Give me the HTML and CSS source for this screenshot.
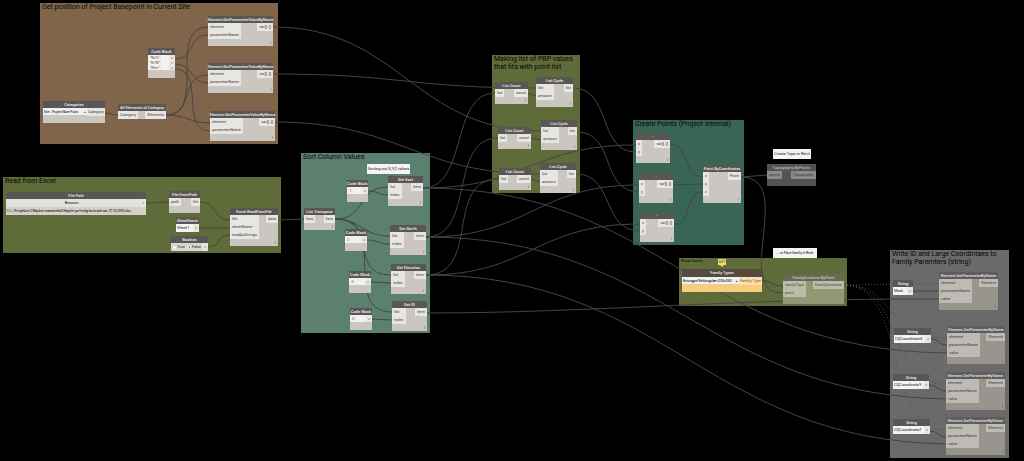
FILE: index.html
```html
<!DOCTYPE html>
<html lang="en">
<head>
<meta charset="utf-8">
<title>Topography graph</title>
<link rel="stylesheet" href="styles.css">
</head>
<body>
<main class="canvas">
<section class="group brown" id="g-base"><h2>Get position of Project Basepoint in Current Site</h2></section>
<section class="group olive" id="g-excel"><h2>Read from Excel</h2></section>
<section class="group sage" id="g-sort"><h2>Sort Column Values</h2></section>
<section class="group olive" id="g-list"><h2>Making list of PBP values<br>that fits with point list</h2></section>
<section class="group teal" id="g-points"><h2>Create Points (Project Internal)</h2></section>
<section class="group olive" id="g-family"><h2 class="minor">Place family</h2></section>
<section class="group gray" id="g-write"><h2>Write ID and Large Coordintaes to<br>Family Paremters (string)</h2></section>

<svg class="wires" aria-hidden="true">
<path d="M105 113C112 113 111 115 118 115"/>
<path d="M166 115C208 115 166 27 208 27"/>
<path d="M166 115C196 115 178 75 208 75"/>
<path d="M166 115C188 115 188 123 210 123"/>
<path d="M175 59C196 59 187 35 208 35"/>
<path d="M175 64C192 64 191 83 208 83"/>
<path d="M175 69C206 69 179 131 210 131"/>
<path d="M273 27C400 27 414 131 541 131"/>
<path d="M273 74C400 74 410 88 537 88"/>
<path d="M275 122C400 122 415 174 540 174"/>
<path d="M146 203C155 203 160 202 169 202"/>
<path d="M200 202C218 202 212 220 230 220"/>
<path d="M199 228H230"/>
<path d="M208 247C222 247 216 235 230 235"/>
<path d="M278 220L304 219"/>
<path d="M335 219C367 219 356 187 388 187"/>
<path d="M335 219C362 219 361 236 390 236"/>
<path d="M335 219C382 219 346 275 391 275"/>
<path d="M335 219C390 219 340 312 392 312"/>
<path d="M368 191C378 191 378 195 388 195"/>
<path d="M367 240C378 240 378 244 390 244"/>
<path d="M371 282L391 283"/>
<path d="M372 319L392 320"/>
<path d="M423 188C468 188 450 93 495 93"/>
<path d="M426 237C476 237 448 138 498 138"/>
<path d="M426 275C482 275 443 179 499 179"/>
<path d="M423 188C526 188 533 145 636 145"/>
<path d="M426 237C530 237 535 185 639 185"/>
<path d="M426 275C530 275 535 224 640 224"/>
<path d="M528 93L536 96"/>
<path d="M531 138L541 140"/>
<path d="M531 179L540 182"/>
<path d="M573 88C612 88 597 152 636 152"/>
<path d="M577 132C616 132 600 192 639 192"/>
<path d="M576 174C615 174 601 231 640 231"/>
<path d="M670 144C690 144 683 177 703 177"/>
<path d="M673 185L703 184"/>
<path d="M674 224C694 224 683 192 703 192"/>
<path d="M741 177L767 175"/>
<path d="M741 177C797 177 731 293 783 293"/>
<path d="M762 281C774 281 771 286 783 286"/>
<path d="M427 313C590 313 740 298 939 299"/>
<path d="M423 188C663 188 695 350 947 353"/>
<path d="M426 237C666 237 706 395 946 399"/>
<path d="M426 275C666 275 706 440 946 444"/>
<path class="dotted" d="M844 285L939 284"/>
<path class="dotted" d="M844 285C899 285 880 338 947 338"/>
<path class="dotted" d="M844 285C904 285 886 384 946 384"/>
<path class="dotted" d="M844 285C909 285 881 430 946 430"/>
<path d="M913 291H939"/>
<path d="M931 339C939 339 939 345 947 345"/>
<path d="M929 385C937 385 938 391 946 391"/>
<path d="M930 431C938 431 938 437 946 437"/>
</svg>

<article class="node lace" id="gp1"><h3>Element.GetParameterValueByName</h3><div class="body"><ul><li>element</li><li>parameterName</li></ul><ul class="out"><li>var[]..[]</li></ul></div></article>
<article class="node lace" id="gp2"><h3>Element.GetParameterValueByName</h3><div class="body"><ul><li>element</li><li>parameterName</li></ul><ul class="out"><li>var[]..[]</li></ul></div></article>
<article class="node lace" id="gp3"><h3>Element.GetParameterValueByName</h3><div class="body"><ul><li>element</li><li>parameterName</li></ul><ul class="out"><li>var[]..[]</li></ul></div></article>
<article class="node code triple" id="code-axes"><h3>Code Block</h3><div class="body"><pre>"N/S";
"E/W";
"Elev";</pre><ul class="out"><li>&gt;</li><li>&gt;</li><li>&gt;</li></ul></div></article>
<article class="node" id="categories"><h3>Categories</h3><div class="body"><label class="pick"><select aria-label="Category"><option>Site - Project Base Point</option></select></label><ul class="out"><li>Category</li></ul></div></article>
<article class="node tight" id="all-elements"><h3>All Elements of Category</h3><div class="body"><ul><li>Category</li></ul><ul class="out"><li>Elements</li></ul></div></article>

<article class="node tight" id="file-path"><h3>File Path</h3><div class="body"><button type="button">Browse...</button><ul class="out"><li>&gt;</li></ul></div><p>C:\...\Prosjekter C\Røyken svømmehall\Høyder på ferdig bunnsåle sør_27-10-2015.xlsx</p></article>
<article class="node" id="from-path"><h3>File.FromPath</h3><div class="body"><ul><li>path</li></ul><ul class="out"><li>file</li></ul></div></article>
<article class="node tight" id="sheet"><h3>SheetName</h3><div class="body"><input type="text" aria-label="Sheet name" value="Sheet1"><ul class="out"><li>&gt;</li></ul></div></article>
<article class="node tight" id="bool"><h3>Boolean</h3><div class="body"><label><input type="radio" name="b">True</label><label><input type="radio" name="b" checked>False</label><ul class="out"><li>&gt;</li></ul></div></article>
<article class="node lace" id="read"><h3>Excel.ReadFromFile</h3><div class="body"><ul><li>file</li><li>sheetName</li><li>readAsStrings</li></ul><ul class="out"><li>data</li></ul></div></article>

<aside class="note" id="note-sort">Sorting out X,Y,Z values</aside>
<article class="node code" id="code-a"><h3>Code Block</h3><div class="body"><pre>1;</pre><ul class="out"><li>&gt;</li></ul></div></article>
<article class="node code" id="code-b"><h3>Code Block</h3><div class="body"><pre>2;</pre><ul class="out"><li>&gt;</li></ul></div></article>
<article class="node code" id="code-c"><h3>Code Block</h3><div class="body"><pre>3;</pre><ul class="out"><li>&gt;</li></ul></div></article>
<article class="node code" id="code-d"><h3>Code Block</h3><div class="body"><pre>0;</pre><ul class="out"><li>&gt;</li></ul></div></article>
<article class="node lace" id="transpose"><h3>List.Transpose</h3><div class="body"><ul><li>lists</li></ul><ul class="out"><li>lists</li></ul></div></article>
<article class="node lace" id="east"><h3>Get East</h3><div class="body"><ul><li>list</li><li>index</li></ul><ul class="out"><li>item</li></ul></div></article>
<article class="node lace" id="north"><h3>Get North</h3><div class="body"><ul><li>list</li><li>index</li></ul><ul class="out"><li>item</li></ul></div></article>
<article class="node lace" id="elevation"><h3>Get Elevation</h3><div class="body"><ul><li>list</li><li>index</li></ul><ul class="out"><li>item</li></ul></div></article>
<article class="node lace" id="get-id"><h3>Get ID</h3><div class="body"><ul><li>list</li><li>index</li></ul><ul class="out"><li>item</li></ul></div></article>

<article class="node lace" id="count1"><h3>List.Count</h3><div class="body"><ul><li>list</li></ul><ul class="out"><li>count</li></ul></div></article>
<article class="node lace" id="count2"><h3>List.Count</h3><div class="body"><ul><li>list</li></ul><ul class="out"><li>count</li></ul></div></article>
<article class="node lace" id="count3"><h3>List.Count</h3><div class="body"><ul><li>list</li></ul><ul class="out"><li>count</li></ul></div></article>
<article class="node lace" id="cycle1"><h3>List.Cycle</h3><div class="body"><ul><li>list</li><li>amount</li></ul><ul class="out"><li>list</li></ul></div></article>
<article class="node lace" id="cycle2"><h3>List.Cycle</h3><div class="body"><ul><li>list</li><li>amount</li></ul><ul class="out"><li>list</li></ul></div></article>
<article class="node lace" id="cycle3"><h3>List.Cycle</h3><div class="body"><ul><li>list</li><li>amount</li></ul><ul class="out"><li>list</li></ul></div></article>

<article class="node lace" id="minus1"><h3>-</h3><div class="body"><ul><li>x</li><li>y</li></ul><ul class="out"><li>var[]..[]</li></ul></div></article>
<article class="node lace" id="minus2"><h3>-</h3><div class="body"><ul><li>x</li><li>y</li></ul><ul class="out"><li>var[]..[]</li></ul></div></article>
<article class="node lace" id="minus3"><h3>-</h3><div class="body"><ul><li>x</li><li>y</li></ul><ul class="out"><li>var[]..[]</li></ul></div></article>
<article class="node lace" id="point"><h3>Point.ByCoordinates</h3><div class="body"><ul><li>x</li><li>y</li><li>z</li></ul><ul class="out"><li>Point</li></ul></div></article>
<aside class="note" id="note-topo">Create Topo in Revit</aside>
<article class="node frozen" id="topo"><h3>Topography.ByPoints</h3><div class="body"><ul><li>points</li></ul><ul class="out"><li>Topography</li></ul></div></article>

<aside class="note small" id="note-family">... or Place Family in Revit</aside>
<article class="node warning" id="family-types"><h3>Family Types</h3><div class="body"><label class="pick"><select aria-label="Family type"><option>Betongpel Rektangulær:(230x230)</option></select></label><ul class="out"><li>Family Type</li></ul></div></article>
<span class="pin">60?</span>
<article class="node faded" id="instance"><h3>FamilyInstance.ByPoint</h3><div class="body"><ul><li>familyType</li><li>point</li></ul><ul class="out"><li>FamilyInstance</li></ul></div></article>

<article class="node tight" id="str1"><h3>String</h3><div class="body"><input type="text" aria-label="Parameter 1" value="Mark"><ul class="out"><li>&gt;</li></ul></div></article>
<article class="node tight" id="str2"><h3>String</h3><div class="body"><input type="text" aria-label="Parameter 2" value="CQCoordinateX"><ul class="out"><li>&gt;</li></ul></div></article>
<article class="node tight" id="str3"><h3>String</h3><div class="body"><input type="text" aria-label="Parameter 3" value="CQCoordinateY"><ul class="out"><li>&gt;</li></ul></div></article>
<article class="node tight" id="str4"><h3>String</h3><div class="body"><input type="text" aria-label="Parameter 4" value="CQCoordinateZ"><ul class="out"><li>&gt;</li></ul></div></article>
<article class="node lace dim" id="set1"><h3>Element.SetParameterByName</h3><div class="body"><ul><li>element</li><li>parameterName</li><li>value</li></ul><ul class="out"><li>Element</li></ul></div></article>
<article class="node lace dim" id="set2"><h3>Element.SetParameterByName</h3><div class="body"><ul><li>element</li><li>parameterName</li><li>value</li></ul><ul class="out"><li>Element</li></ul></div></article>
<article class="node lace dim" id="set3"><h3>Element.SetParameterByName</h3><div class="body"><ul><li>element</li><li>parameterName</li><li>value</li></ul><ul class="out"><li>Element</li></ul></div></article>
<article class="node lace dim" id="set4"><h3>Element.SetParameterByName</h3><div class="body"><ul><li>element</li><li>parameterName</li><li>value</li></ul><ul class="out"><li>Element</li></ul></div></article>
</main>
</body>
</html>
```
FILE: styles.css
```css
* { box-sizing: border-box; }
body { margin: 0; background: #000; font-family: Roboto, "Noto Sans", sans-serif; }
h2, h3, ul, p, pre { margin: 0; padding: 0; font-weight: inherit; }
ul { list-style: none; }
.canvas { position: relative; min-height: 100vh; overflow: hidden; font-size: 4px; line-height: 8px; color: #3c3936; }

.group { position: absolute; }
.group h2 { padding: 0 2px; font-size: 7px; line-height: 8px; font-weight: 400; color: #050604; white-space: nowrap; }
.group h2.minor { font-size: 4px; line-height: 6px; }
.brown { background: #81654b; }
.olive { background: #5f6b38; }
.sage { background: #5b8070; }
.teal { background: #386554; }
.gray { background: #6a6a6a; }

.wires { position: absolute; inset: 0; width: 100%; height: 100%; fill: none; stroke: #454547; stroke-width: 1; }
.dotted { stroke-dasharray: 1 2; stroke: #505050; }

.node { position: absolute; }
.node h3 { background: #595656; color: #f0eeec; font-size: 4px; font-weight: 500; line-height: 7px; height: 7px; text-align: center; white-space: nowrap; display: flex; justify-content: center; }
.body { display: flex; justify-content: space-between; align-items: flex-start; background: #cbc6bf; padding-bottom: 7px; white-space: nowrap; }
.body li { background: #e8e6e2; padding: 0 2px; height: 8px; }
.tight .body { padding-bottom: 0; }
.lace::after { content: "l"; position: absolute; right: 2px; bottom: 0; line-height: 6px; color: #55524f; }

.node input[type="text"], .node button, .node select { flex: 1; min-width: 0; width: 100%; height: 8px; border: 0; padding: 0 1px; border-radius: 0; background: #f4f3f1; color: #101010; font: inherit; line-height: 8px; appearance: none; }
.node button { background: #e3e1dd; text-align: center; }
.node p { background: #d3d0ca; padding: 0 1px; color: #111; white-space: nowrap; font-family: "Open Sans", sans-serif; font-size: 3px; font-weight: 600; }
.pick { position: relative; display: flex; flex: 1; min-width: 0; font-family: "Open Sans", sans-serif; font-size: 3px; font-weight: 600; }
.pick::after { content: "▴"; position: absolute; right: 1px; }
.node .pick select { padding: 0 1px; height: 7px; background: #eef0f3; text-overflow: clip; }
.pick + .out li { padding: 0 1px; }
#bool .body { background: #d9d6d1; }
#bool label { display: flex; align-items: center; gap: 1px; color: #222; padding-left: 2px; }
#bool input { appearance: none; margin: 0; width: 3px; height: 3px; border: 1px solid #fff; border-radius: 50%; background: #fff; }
#bool input:checked { background: #444; }

.code .body { padding-bottom: 8px; background: #cbc6bf; }
.code pre { flex: 1; background: #f2f1ef; padding: 0 2px; height: 7px; font-family: inherit; line-height: 7px; color: #3676a8; }
.code .body li { height: 7px; line-height: 7px; }
.triple .body pre { height: 15px; line-height: 5px; color: #6b4020; }
.triple .body li { height: 5px; line-height: 5px; }

.frozen h3, .frozen .body { background: #545252; color: #bbb; }
.frozen .body li { background: #8d8b89; color: #3a3838; }
.faded h3 { background: #656956; color: #c9cbb8; }
.faded .body { background: #929776; padding-bottom: 7px; color: #45493a; }
.faded .body li { background: #b9bda9; }
.dim h3 { background: #5e5c5c; color: #e6e4e2; }
.dim .body { background: #99958e; }
.dim .body li { background: #bebbb5; }
.warning h3 { background: #554a40; height: 8px; line-height: 8px; font-size: 4px; }
.warning .body { background: #f8cb7d; }
.warning .body li { background: #fbe0ae; color: #6c5838; }

.note { position: absolute; display: flex; align-items: center; justify-content: center; background: #f4f4f4; color: #111; white-space: nowrap; line-height: 10px; }
.note.small { font-family: "Open Sans", sans-serif; font-size: 3px; font-weight: 600; }
.pin { position: absolute; left: 718px; top: 259px; width: 8px; background: #e9df68; color: #443f10; text-align: center; line-height: 6px; }
.pin::after { content: ""; position: absolute; top: 6px; left: 2px; border: 2px solid transparent; border-top-color: #e9df68; }

#g-base { left: 40px; top: 3px; width: 238px; height: 141px; }
#g-excel { left: 3px; top: 177px; width: 278px; height: 76px; }
#g-sort { left: 301px; top: 153px; width: 129px; height: 180px; }
#g-list { left: 492px; top: 55px; width: 88px; height: 138px; }
#g-points { left: 633px; top: 120px; width: 111px; height: 125px; }
#g-family { left: 679px; top: 258px; width: 168px; height: 48px; }
#g-write { left: 890px; top: 250px; width: 119px; height: 208px; }

#gp1 { left: 208px; top: 16px; width: 65px; }
#gp2 { left: 208px; top: 63px; width: 65px; }
#gp3 { left: 210px; top: 111px; width: 65px; }
#code-axes { left: 148px; top: 48px; width: 27px; }
#categories { left: 43px; top: 101px; width: 62px; }
#all-elements { left: 118px; top: 104px; width: 48px; }
#file-path { left: 6px; top: 192px; width: 140px; }
#from-path { left: 169px; top: 191px; width: 31px; }
#sheet { left: 176px; top: 217px; width: 23px; }
#bool { left: 171px; top: 236px; width: 37px; }
#read { left: 230px; top: 208px; width: 48px; }
#note-sort { left: 367px; top: 164px; width: 43px; }
#code-a { left: 347px; top: 180px; width: 21px; }
#code-b { left: 345px; top: 229px; width: 22px; }
#code-c { left: 349px; top: 271px; width: 22px; }
#code-d { left: 350px; top: 308px; width: 22px; }
#transpose { left: 304px; top: 208px; width: 31px; }
#east { left: 388px; top: 176px; width: 35px; }
#north { left: 390px; top: 225px; width: 36px; }
#elevation { left: 391px; top: 264px; width: 35px; }
#get-id { left: 392px; top: 301px; width: 35px; }
#count1 { left: 495px; top: 82px; width: 33px; }
#count2 { left: 498px; top: 127px; width: 33px; }
#count3 { left: 499px; top: 168px; width: 32px; }
#cycle1 { left: 536px; top: 77px; width: 37px; }
#cycle2 { left: 541px; top: 120px; width: 36px; }
#cycle3 { left: 540px; top: 163px; width: 36px; }
#minus1 { left: 636px; top: 133px; width: 34px; }
#minus2 { left: 639px; top: 173px; width: 34px; }
#minus3 { left: 640px; top: 212px; width: 34px; }
#point { left: 703px; top: 165px; width: 38px; }
#note-topo { left: 773px; top: 149px; width: 38px; }
#topo { left: 767px; top: 164px; width: 49px; }
#note-family { left: 773px; top: 248px; width: 44px; }
#family-types { left: 682px; top: 269px; width: 80px; }
#instance { left: 783px; top: 274px; width: 61px; }
#str1 { left: 893px; top: 280px; width: 20px; }
#str2 { left: 894px; top: 328px; width: 37px; }
#str3 { left: 893px; top: 374px; width: 36px; }
#str4 { left: 893px; top: 419px; width: 37px; }
#set1 { left: 939px; top: 272px; width: 59px; }
#set2 { left: 947px; top: 326px; width: 58px; }
#set3 { left: 946px; top: 372px; width: 59px; }
#set4 { left: 946px; top: 417px; width: 59px; }
```
